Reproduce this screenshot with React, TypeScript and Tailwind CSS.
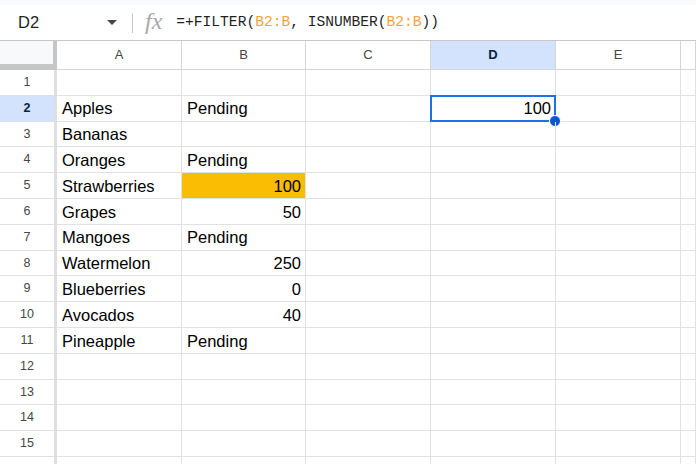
import React, { FC } from "react";

type CellValue = string | number | null;

const columns = ['A', 'B', 'C', 'D', 'E', ''];

const rows: [CellValue, CellValue][] = [
    [null, null],
    ['Apples', 'Pending'],
    ['Bananas', null],
    ['Oranges', 'Pending'],
    ['Strawberries', 100],
    ['Grapes', 50],
    ['Mangoes', 'Pending'],
    ['Watermelon', 250],
    ['Blueberries', 0],
    ['Avocados', 40],
    ['Pineapple', 'Pending'],
    [null, null],
    [null, null],
    [null, null],
    [null, null],
    [null, null],
];

const gridCols = 'grid grid-cols-[57px_125px_124px_125px_125px_125px_1fr]';

const Cell: FC<{ value: CellValue; highlight?: boolean }> = ({ value, highlight }) => {
    const isNumber = typeof value === 'number';
    return (
        <div
            className={
                'flex items-center pt-[1px] border-r border-b border-[#e1e1e1] text-[16.5px] text-black overflow-hidden whitespace-nowrap ' +
                (isNumber ? 'justify-end pr-[4px] ' : 'justify-start pl-[5px] ') +
                (highlight ? 'bg-[#fbbc04]' : 'bg-white')
            }
        >
            {value !== null ? String(value) : ''}
        </div>
    );
};

const FormulaBar: FC = () => (
    <div className="h-[41px] flex flex-col border-b border-[#c7c7c7]">
        <div className="h-[5px] bg-[#f9fbfd]" />
        <div className="flex-1 flex items-center bg-white">
            <div className="w-[132px] flex items-center pl-[18px] pr-[15px] justify-between">
                <span className="text-[16.5px] text-[#1f1f1f]">D2</span>
                <span className="w-0 h-0 border-l-[5px] border-r-[5px] border-t-[5px] border-l-transparent border-r-transparent border-t-[#444746]" />
            </div>
            <div className="w-px h-[20px] bg-[#c7c7c7]" />
            <span className="ml-[12px] mr-[14px] text-[24px] italic text-[#a8a8a8] font-['Liberation_Serif',serif] leading-none -mt-[3px]">
                fx
            </span>
            <span className="font-['Liberation_Mono',monospace] text-[14.6px] text-[#1f1f1f]">
                =+FILTER(<span className="text-[#f5a23c]">B2:B</span>, ISNUMBER(<span className="text-[#f5a23c]">B2:B</span>))
            </span>
        </div>
    </div>
);

const App: FC = () => {
    return (
        <div className="w-[696px] h-[464px] overflow-hidden bg-white font-['Liberation_Sans',Arial,sans-serif]">
            <FormulaBar />

            <div className={gridCols + ' h-[29px]'}>
                <div className="bg-[#f8f9fa] border-r-[4px] border-b-[6px] border-[#c4c7c5]" />
                {columns.map((col, i) => (
                    <div
                        key={i}
                        className={
                            'flex items-center justify-center border-r border-b border-[#d5d5d5] text-[13px] ' +
                            (col === 'D' ? 'bg-[#d3e3fd] text-[#041e49] font-bold' : 'bg-white text-[#444746]')
                        }
                    >
                        {col}
                    </div>
                ))}
            </div>

            {rows.map(([a, b], i) => {
                const rowNo = i + 1;
                const isActiveRow = rowNo === 2;
                return (
                    <div key={rowNo} className={gridCols + ' h-[25.8px]'}>
                        <div
                            className={
                                'flex items-center justify-center border-r-[3px] border-b border-[#dfdfdf] text-[12.5px] ' +
                                (isActiveRow ? 'bg-[#d3e3fd] text-[#041e49] font-bold' : 'bg-white text-[#444746]')
                            }
                        >
                            {rowNo}
                        </div>
                        <Cell value={a} />
                        <Cell value={b} highlight={rowNo === 5} />
                        <Cell value={null} />
                        <div className="relative border-r border-b border-[#e1e1e1]">
                            {isActiveRow && (
                                <>
                                    <div className="absolute -left-px -top-px -right-px -bottom-px border-2 border-[#1a73e8] flex items-center justify-end pr-[3px] pt-[1px] text-[16.5px] text-black">
                                        100
                                    </div>
                                    <div className="absolute -right-[6px] -bottom-[6px] w-[12px] h-[12px] rounded-full bg-[#0b57d0] border border-white" />
                                </>
                            )}
                        </div>
                        <Cell value={null} />
                        <Cell value={null} />
                    </div>
                );
            })}
        </div>
    );
};

export default App;
